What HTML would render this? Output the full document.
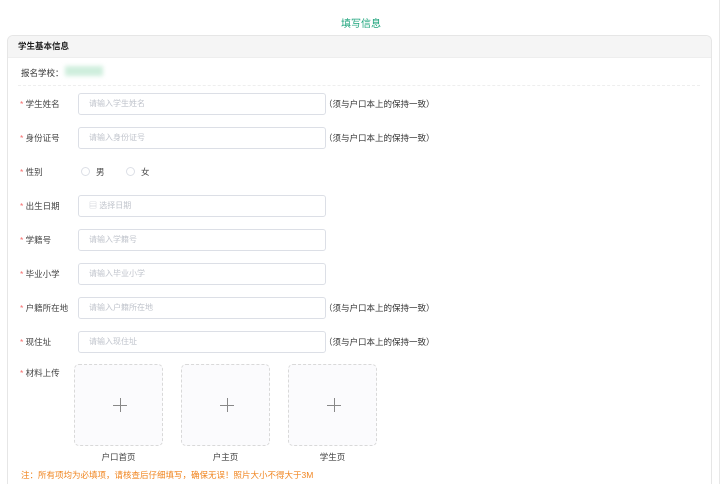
<!DOCTYPE html>
<html style="width:722px;height:484px;overflow:hidden"><head><meta charset="utf-8"><style>
*{margin:0;padding:0;box-sizing:border-box}
body{width:722px;height:484px;overflow:hidden;background:#fff;font-family:"Liberation Sans","Noto Sans CJK SC",sans-serif;font-size:9px;color:#333;position:relative}
.t{position:absolute;top:15px;left:0;width:722px;text-align:center;color:#1aa37a;font-size:10px}
.card{position:absolute;left:7px;top:35px;width:705px;height:460px;border:1px solid #e6e6e6;border-bottom:none;border-radius:6px 6px 0 0;overflow:hidden}
.hd{height:22px;background:#f5f5f5;border-bottom:1px solid #eee;padding-left:10px;line-height:21px;font-weight:bold;font-size:8.5px;color:#222}
.school{position:absolute;left:13px;top:31px;font-size:8.5px;color:#333}
.blur{position:absolute;left:57px;top:30px;width:38px;height:10px;background:#cfeedd;filter:blur(2px)}
.sep{position:absolute;left:10px;top:49px;width:682px;border-top:1px dashed #eee}
.row{position:absolute;left:0;height:22px;width:700px}
.lb{position:absolute;left:12px;top:5px;font-size:8.5px;color:#444}
.lb b{color:#f56c6c;font-weight:normal}
.in{position:absolute;left:70px;top:0;width:248px;height:22px;border:1px solid #dcdfe6;border-radius:3px;color:#c0c4cc;font-size:8px;padding-left:10px;line-height:20px}
.nt{position:absolute;left:316px;top:5px;font-size:8.5px;color:#333}
.rad{position:absolute;top:5px;font-size:8.5px;color:#444}
.rad i{display:inline-block;width:9px;height:9px;border:1px solid #dcdfe6;border-radius:50%;vertical-align:-1px;margin-right:6px}
.up{position:absolute;top:328px;width:89px;height:82px;border:1px dashed #d9d9d9;border-radius:5px;background:#fbfbfd}
.up:before{content:"";position:absolute;left:38px;top:40px;width:14px;height:1px;background:#888}
.up:after{content:"";position:absolute;left:44.5px;top:33px;width:1px;height:14px;background:#888}
.cap{position:absolute;top:415px;width:89px;text-align:center;font-size:8.5px;color:#444}
.warn{position:absolute;left:13px;top:433px;color:#f0841e;font-size:8.5px}
.sb{position:absolute;left:719px;top:0;width:1px;height:484px;background:#e8e8e8}
</style></head><body>
<div class="t">填写信息</div>
<div class="sb"></div>
<div class="card">
<div class="hd">学生基本信息</div>
<div class="school">报名学校：</div><div class="blur"></div>
<div class="sep"></div>
<div class="row" style="top:57px"><div class="lb"><b>*</b> 学生姓名</div><div class="in">请输入学生姓名</div><div class="nt">（须与户口本上的保持一致）</div></div>
<div class="row" style="top:91px"><div class="lb"><b>*</b> 身份证号</div><div class="in">请输入身份证号</div><div class="nt">（须与户口本上的保持一致）</div></div>
<div class="row" style="top:125px"><div class="lb"><b>*</b> 性别</div><div class="rad" style="left:73px"><i></i>男</div><div class="rad" style="left:118px"><i></i>女</div></div>
<div class="row" style="top:159px"><div class="lb"><b>*</b> 出生日期</div><div class="in">▤ 选择日期</div></div>
<div class="row" style="top:193px"><div class="lb"><b>*</b> 学籍号</div><div class="in">请输入学籍号</div></div>
<div class="row" style="top:227px"><div class="lb"><b>*</b> 毕业小学</div><div class="in">请输入毕业小学</div></div>
<div class="row" style="top:261px"><div class="lb"><b>*</b> 户籍所在地</div><div class="in">请输入户籍所在地</div><div class="nt">（须与户口本上的保持一致）</div></div>
<div class="row" style="top:295px"><div class="lb"><b>*</b> 现住址</div><div class="in">请输入现住址</div><div class="nt">（须与户口本上的保持一致）</div></div>
<div class="row" style="top:326px"><div class="lb"><b>*</b> 材料上传</div></div>
<div class="up" style="left:66px"></div><div class="up" style="left:173px"></div><div class="up" style="left:280px"></div>
<div class="cap" style="left:66px">户口首页</div><div class="cap" style="left:173px">户主页</div><div class="cap" style="left:280px">学生页</div>
<div class="warn">注：所有项均为必填项，请核查后仔细填写，确保无误！照片大小不得大于3M</div>
</div>
</body></html>
